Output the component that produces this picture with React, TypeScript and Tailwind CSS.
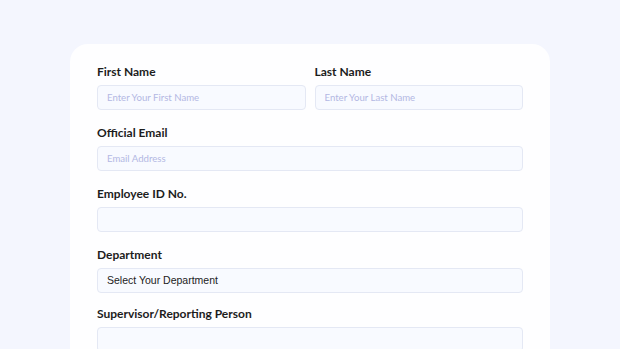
const fieldInput =
  "h-[25px] w-full rounded-[4px] border border-[#e4e8f4] bg-[#f8faff] px-[9px] text-[9.6px] text-[#333] outline-none placeholder:text-[#b3b8e3] font-['Lato',sans-serif]";

function Label({ children }: { children: React.ReactNode }) {
  return (
    <label className="block h-[18px] text-[12px] font-bold leading-[18px] text-[#1c1c1c] font-['Lato',sans-serif]">
      {children}
    </label>
  );
}

export default function App() {
  return (
    <div className="h-[349px] w-full overflow-hidden bg-[#f4f6fe] pt-[44px]">
      <div className="ml-[70px] w-[480px] rounded-[18px] bg-[#fefeff] px-[27px] pb-[40px] pt-[19px]">
        {/* Name row */}
        <div className="grid grid-cols-2 gap-[9px]">
          <div>
            <Label>First Name</Label>
            <input className={`${fieldInput} mt-[4px]`} placeholder="Enter Your First Name" />
          </div>
          <div>
            <Label>Last Name</Label>
            <input className={`${fieldInput} mt-[4px]`} placeholder="Enter Your Last Name" />
          </div>
        </div>

        <div className="mt-[14px]">
          <Label>Official Email</Label>
          <input className={`${fieldInput} mt-[4px]`} placeholder="Email Address" />
        </div>

        <div className="mt-[14px]">
          <Label>Employee ID No.</Label>
          <input className={`${fieldInput} mt-[4px]`} />
        </div>

        <div className="mt-[14px]">
          <Label>Department</Label>
          <div className="mt-[4px] flex h-[25px] w-full items-center rounded-[4px] border border-[#e4e8f4] bg-[#f8faff] px-[9px] text-[10.5px] text-[#222] font-['Liberation_Sans',Arial,sans-serif]">
            Select Your Department
          </div>
        </div>

        <div className="mt-[12px]">
          <Label>Supervisor/Reporting Person</Label>
          <input className={`${fieldInput} mt-[4px]`} />
        </div>
      </div>
    </div>
  );
}
